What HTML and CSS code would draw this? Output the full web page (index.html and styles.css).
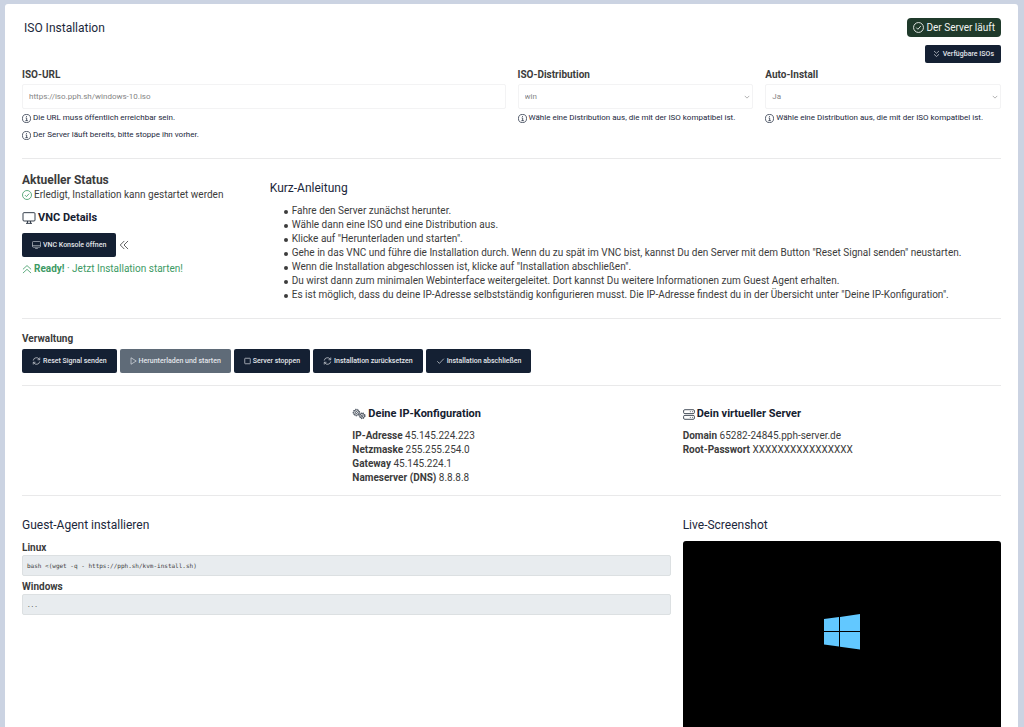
FILE: index.html
```
<!DOCTYPE html>
<html lang="de">
<head>
<meta charset="utf-8">
<meta name="viewport" content="width=device-width, initial-scale=1">
<title>ISO Installation</title>
<link rel="stylesheet" href="styles.css">
</head>
<body>
<svg class="sprite" aria-hidden="true">
  <symbol id="info" viewBox="0 0 16 16"><circle cx="8" cy="8" r="7.2"/><path d="M6.5 7h1.8v4.8M6 11.8h4.4M8 3.7v1.6"/></symbol>
  <symbol id="ok" viewBox="0 0 16 16"><circle cx="8" cy="8" r="7.2"/><path d="M4.8 8.2l2.3 2.4 4.3-4.8"/></symbol>
  <symbol id="down" viewBox="0 0 16 16"><path d="M3 2l5 4.5L13 2M3 8.500l5 4.500 5-4.500"/></symbol>
  <symbol id="up" viewBox="0 0 16 16"><path d="M1.500 8.500L8 2.500l6.500 6M1.500 14.500l6.500-6 6.500 6"/></symbol>
  <symbol id="left" viewBox="0 0 16 16"><path d="M8.500 1.500L2 8l6.500 6.500M14.500 1.500L8 8l6.500 6.500"/></symbol>
  <symbol id="chevron" viewBox="0 0 16 16"><path d="M2 5l6 6 6-6"/></symbol>
  <symbol id="screen" viewBox="0 0 20 18"><rect x="1" y="1" width="18" height="12.500" rx="1.500"/><path d="M8 13.500L7.500 17M12 13.500l.5 3.500M5.500 17h9"/></symbol>
  <symbol id="screen-small" viewBox="0 0 20 18"><rect x="1" y="1" width="18" height="13" rx="2"/><path d="M1 10.500h18M7 17h6"/></symbol>
  <symbol id="sync" viewBox="0 0 16 16"><path d="M1.500 7A6.500 6.500 0 0 1 13.800 5M14.500 1v4.500H10M14.500 9A6.500 6.500 0 0 1 2.200 11M1.500 15v-4.500H6"/></symbol>
  <symbol id="play" viewBox="0 0 14 16"><path d="M2 1.500L12.500 8 2 14.500z"/></symbol>
  <symbol id="stop" viewBox="0 0 14 16"><rect x="1.500" y="2.500" width="11" height="11" rx="1"/></symbol>
  <symbol id="check" viewBox="0 0 16 16"><path d="M1.500 8.500l4.300 4.300L14.500 3.500"/></symbol>
  <symbol id="server" viewBox="0 0 20 18"><rect x="1" y="1" width="18" height="6.500" rx="2"/><rect x="1" y="10.500" width="18" height="6.500" rx="2"/><path d="M11.500 4.300h1.300M15 4.300h1.300M11.500 13.800h1.300M15 13.800h1.300"/></symbol>
  <symbol id="gears" viewBox="0 0 24 18"><circle cx="7.500" cy="6.500" r="4.600"/><circle cx="7.500" cy="6.500" r="1.800"/><circle class="teeth" cx="7.500" cy="6.500" r="5.700"/><circle cx="17.500" cy="12" r="4"/><circle cx="17.500" cy="12" r="1.500"/><circle class="teeth" cx="17.500" cy="12" r="5"/></symbol>
</svg>

<main class="card">
  <header class="head">
    <h1 class="title page-title">ISO Installation</h1>
    <div class="head-side">
      <span class="badge"><svg class="icon"><use href="#ok"/></svg>Der Server läuft</span>
      <button type="button" class="btn btn-small"><svg class="icon"><use href="#down"/></svg>Verfügbare ISOs</button>
    </div>
  </header>

  <form class="grid form">
    <div class="field span-6">
      <label for="url">ISO-URL</label>
      <input class="control" id="url" type="text" value="https://iso.pph.sh/windows-10.iso" disabled>
      <p class="help"><svg class="icon"><use href="#info"/></svg>Die URL muss öffentlich erreichbar sein.</p>
      <p class="help"><svg class="icon"><use href="#info"/></svg>Der Server läuft bereits, bitte stoppe ihn vorher.</p>
    </div>
    <div class="field span-3">
      <label for="distribution">ISO-Distribution</label>
      <div class="select-wrap">
        <select class="control" id="distribution" disabled><option>win</option></select>
        <svg class="icon caret"><use href="#chevron"/></svg>
      </div>
      <p class="help"><svg class="icon"><use href="#info"/></svg>Wähle eine Distribution aus, die mit der ISO kompatibel ist.</p>
    </div>
    <div class="field span-3">
      <label for="auto">Auto-Install</label>
      <div class="select-wrap">
        <select class="control" id="auto" disabled><option>Ja</option></select>
        <svg class="icon caret"><use href="#chevron"/></svg>
      </div>
      <p class="help"><svg class="icon"><use href="#info"/></svg>Wähle eine Distribution aus, die mit der ISO kompatibel ist.</p>
    </div>
  </form>

  <section class="grid status">
    <div class="span-3">
      <h2 class="status-title">Aktueller Status</h2>
      <p class="line"><svg class="icon ok"><use href="#ok"/></svg>Erledigt, Installation kann gestartet werden</p>
      <h3 class="subtitle vnc-title"><svg class="icon wide"><use href="#screen"/></svg>VNC Details</h3>
      <div class="vnc-row">
        <button type="button" class="btn"><svg class="icon"><use href="#screen-small"/></svg>VNC Konsole öffnen</button>
        <svg class="icon hint"><use href="#left"/></svg>
      </div>
      <p class="line ready"><svg class="icon"><use href="#up"/></svg><span><b>Ready!</b> · Jetzt Installation starten!</span></p>
    </div>
    <div class="span-9 guide">
      <h2 class="title">Kurz-Anleitung</h2>
      <ul class="steps">
        <li>Fahre den Server zunächst herunter.</li>
        <li>Wähle dann eine ISO und eine Distribution aus.</li>
        <li>Klicke auf "Herunterladen und starten".</li>
        <li>Gehe in das VNC und führe die Installation durch. Wenn du zu spät im VNC bist, kannst Du den Server mit dem Button "Reset Signal senden" neustarten.</li>
        <li>Wenn die Installation abgeschlossen ist, klicke auf "Installation abschließen".</li>
        <li>Du wirst dann zum minimalen Webinterface weitergeleitet. Dort kannst Du weitere Informationen zum Guest Agent erhalten.</li>
        <li>Es ist möglich, dass du deine IP-Adresse selbstständig konfigurieren musst. Die IP-Adresse findest du in der Übersicht unter "Deine IP-Konfiguration".</li>
      </ul>
    </div>
  </section>

  <section class="manage">
    <h2 class="label">Verwaltung</h2>
    <div class="actions">
      <button type="button" class="btn"><svg class="icon"><use href="#sync"/></svg>Reset Signal senden</button>
      <button type="button" class="btn" disabled><svg class="icon narrow"><use href="#play"/></svg>Herunterladen und starten</button>
      <button type="button" class="btn"><svg class="icon narrow"><use href="#stop"/></svg>Server stoppen</button>
      <button type="button" class="btn"><svg class="icon"><use href="#sync"/></svg>Installation zurücksetzen</button>
      <button type="button" class="btn"><svg class="icon"><use href="#check"/></svg>Installation abschließen</button>
    </div>
  </section>

  <section class="grid details">
    <div class="detail-first">
      <h3 class="subtitle"><svg class="icon wide"><use href="#gears"/></svg>Deine IP-Konfiguration</h3>
      <p><b>IP-Adresse</b> 45.145.224.223</p>
      <p><b>Netzmaske</b> 255.255.254.0</p>
      <p><b>Gateway</b> 45.145.224.1</p>
      <p><b>Nameserver (DNS)</b> 8.8.8.8</p>
    </div>
    <div class="span-4">
      <h3 class="subtitle"><svg class="icon server"><use href="#server"/></svg>Dein virtueller Server</h3>
      <p><b>Domain</b> 65282-24845.pph-server.de</p>
      <p><b>Root-Passwort</b> XXXXXXXXXXXXXXXX</p>
    </div>
  </section>

  <section class="grid agent">
    <div class="span-8">
      <h2 class="title">Guest-Agent installieren</h2>
      <h3 class="label">Linux</h3>
      <pre class="code">bash &lt;(wget -q - https://pph.sh/kvm-install.sh)</pre>
      <h3 class="label">Windows</h3>
      <pre class="code">...</pre>
    </div>
    <div class="span-4">
      <h2 class="title">Live-Screenshot</h2>
      <div class="screen">
        <svg class="logo" viewBox="0 0 36 36" role="img" aria-label="Windows"><path d="M0 5l15-2v14H0zM16 2.900L36 0v17H16zM0 18h15v14.500L0 30.500zM16 18h20v17.500l-20-2.800z"/></svg>
      </div>
    </div>
  </section>
</main>
</body>
</html>
```
FILE: styles.css
```
* {
  box-sizing: border-box;
}

html {
  overflow: hidden;
}

body {
  margin: 0;
  padding: 4px 6px 0 5px;
  background: #cbd3e2;
  color: #3c3c3c;
  font: 10px/14px Roboto, sans-serif;
}

h1, h2, h3, p, ul, pre {
  margin: 0;
}

b {
  font-weight: 700;
}

.sprite {
  position: absolute;
  width: 0;
  height: 0;
}

.card {
  padding: 14px 17px 0;
  background: #fff;
  border-radius: 3px;
}

.grid {
  display: grid;
  grid-template-columns: repeat(12, minmax(0, 1fr));
  column-gap: 12px;
}

.span-3 { grid-column: span 3; }
.span-4 { grid-column: span 4; }
.span-6 { grid-column: span 6; }
.span-8 { grid-column: span 8; }
.span-9 { grid-column: span 9; }

.icon {
  flex: none;
  width: 10px;
  height: 10px;
  fill: none;
  stroke: currentColor;
  stroke-width: 1.3;
}

.teeth {
  stroke-dasharray: 2 2;
}

.title {
  color: #1b273b;
  font-size: 12px;
  font-weight: 400;
  line-height: 16px;
}

.label,
.field label {
  font-size: 10px;
  font-weight: 700;
  line-height: 14px;
}

.subtitle {
  display: flex;
  align-items: center;
  gap: 2px;
  color: #15202f;
  font-size: 11px;
  font-weight: 700;
  line-height: 14px;
}

.head {
  display: flex;
  justify-content: space-between;
}

.page-title {
  padding: 2px;
}

.head-side {
  display: flex;
  flex-direction: column;
  align-items: flex-end;
  gap: 8px;
}

.badge {
  display: flex;
  align-items: center;
  gap: 2px;
  height: 19px;
  padding: 0 6px;
  border-radius: 4px;
  background: #1f3a2b;
  color: #f1f4f2;
  font-size: 10px;
}

.badge .icon {
  width: 11px;
  height: 11px;
}

.btn {
  display: flex;
  align-items: center;
  gap: 2px;
  height: 24px;
  padding: 0 10px;
  border: 0;
  border-radius: 2px;
  background: #142033;
  color: #e3e6eb;
  font: 500 7px/10px Roboto, sans-serif;
}

.btn:disabled {
  background: #5f6b78;
}

.btn .icon {
  width: 9px;
  height: 8px;
}

.btn .narrow {
  width: 7px;
}

.btn-small {
  height: 18px;
  padding: 0 7px;
}

.form {
  padding: 5px 0 16px;
}

.field label {
  display: block;
  margin-bottom: 2px;
}

.control {
  display: block;
  width: 100%;
  height: 25px;
  padding: 0 6px;
  border: 1px solid #f3f3f4;
  border-radius: 2px;
  background: #fff;
  color: #858585;
  font: 8px/12px Roboto, sans-serif;
  opacity: 1;
  appearance: none;
}

.select-wrap {
  position: relative;
}

.caret {
  position: absolute;
  top: 10px;
  right: 3px;
  width: 6px;
  height: 6px;
  color: #999;
  stroke-width: 2;
}

.help {
  display: flex;
  align-items: center;
  gap: 2px;
  margin-top: 2px;
  color: #1b273b;
  font-size: 8px;
}

.help + .help {
  margin-top: 3px;
}

.help .icon {
  width: 9px;
  height: 9px;
}

.status,
.manage,
.details,
.agent {
  border-top: 1px solid #e9e9ea;
}

.status {
  padding: 13px 0 16px;
}

.status-title {
  font-size: 12px;
  line-height: 16px;
}

.line {
  display: flex;
  align-items: center;
  gap: 2px;
}

.ok,
.ready {
  color: #3c9a64;
}

.vnc-title {
  margin: 9px 0 8px;
}

.wide {
  width: 14px;
  height: 12px;
}

.vnc-row {
  display: flex;
  align-items: center;
  gap: 3px;
  margin-bottom: 5px;
}

.guide {
  padding-top: 8px;
}

.steps {
  margin-top: 8px;
  padding-left: 14px;
  list-style: none;
}

.steps li {
  display: flex;
  gap: 4px;
}

.steps li::before {
  content: "";
  flex: none;
  width: 4px;
  height: 4px;
  margin-top: 6px;
  border-radius: 2px;
  background: currentColor;
}

.manage {
  padding: 13px 0 12px;
}

.actions {
  display: flex;
  flex-wrap: wrap;
  gap: 3px;
  margin-top: 3px;
}

.details {
  padding: 21px 0 10px;
}

.detail-first {
  grid-column: 5 / span 4;
}

.details .subtitle {
  margin-bottom: 8px;
}

.server {
  width: 12px;
  height: 11px;
}

.agent {
  padding-top: 21px;
}

.agent .title {
  margin-bottom: 8px;
}

.code {
  height: 21px;
  margin: 0 0 4px;
  padding: 0 4px;
  border: 1px solid #dce0e2;
  border-radius: 2px;
  background: #e8ecef;
  font: 6px/19px "DejaVu Sans Mono", monospace;
}

.screen {
  display: grid;
  justify-items: center;
  align-items: start;
  aspect-ratio: 4 / 3;
  padding-top: 23%;
  border-radius: 3px;
  background: #000;
}

.logo {
  width: 36px;
  height: 36px;
  fill: #62c8ff;
}
```
